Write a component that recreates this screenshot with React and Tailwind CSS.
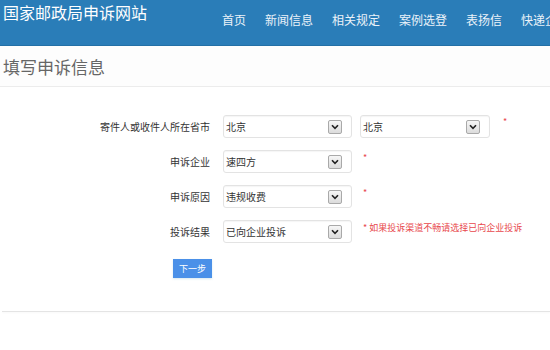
import React from "react";

const font = { fontFamily: '"Noto Sans CJK SC", "Noto Sans", sans-serif' };

function Arrow() {
  return (
    <span className="flex h-[14px] w-[14px] items-center justify-center rounded-[2px] border border-[#a9a9a9] bg-gradient-to-b from-[#f6f6f6] to-[#dcdcdc]">
      <svg width="8" height="6" viewBox="0 0 8 6">
        <path d="M1 1.2 L4 4.4 L7 1.2" fill="none" stroke="#222" strokeWidth="1.6" />
      </svg>
    </span>
  );
}

function Select({ value, w = "w-[129px]" }) {
  return (
    <div className={`flex h-[23px] ${w} items-center justify-between rounded-[3px] border border-[#e3e3e3] bg-white pl-[2px] pr-[9px] shadow-[inset_0_1px_1px_rgba(0,0,0,0.04)]`}>
      <span className="text-[10px] leading-none text-[#333]">{value}</span>
      <Arrow />
    </div>
  );
}

function Row({ label, children }) {
  return (
    <div className="flex h-[23px] items-center">
      <div className="w-[210px] pr-0 text-right text-[10px] leading-none text-[#333]">{label}</div>
      <div className="ml-[13px] flex h-full items-start">{children}</div>
    </div>
  );
}

const Star = ({ className = "" }) => (
  <span className={`text-[9px] leading-none text-[#e8474c] ${className}`}>*</span>
);

export default function App() {
  const nav = ["首页", "新闻信息", "相关规定", "案例选登", "表扬信", "快递企业"];
  return (
    <div style={font} className="h-[350px] w-[550px] overflow-hidden bg-white">
      <header className="flex h-[46px] border-b border-[#2370a6] bg-[#2a7db8]">
        <div className="ml-[3px] mt-[3px] whitespace-nowrap text-[16px] leading-[18px] text-white">国家邮政局申诉网站</div>
        <nav className="ml-[75px] mt-[13px] flex gap-[19px] whitespace-nowrap text-[12px] leading-[14px] text-[#eaf2f9]">
          {nav.map((n) => (
            <span key={n}>{n}</span>
          ))}
        </nav>
      </header>
      <div className="flex h-[41px] items-center border-b border-[#ececec] bg-[#fdfdfd] pl-[3px]">
        <h1 className="text-[17px] font-normal leading-none text-[#666]">填写申诉信息</h1>
      </div>
      <div className="mt-[28px] flex flex-col gap-[12px]">
        <Row label="寄件人或收件人所在省市">
          <Select value="北京" />
          <div className="ml-[8px]">
            <Select value="北京" w="w-[130px]" />
          </div>
          <Star className="ml-[13px] mt-[2px]" />
        </Row>
        <Row label="申诉企业">
          <Select value="速四方" />
          <Star className="ml-[11px] mt-[3px]" />
        </Row>
        <Row label="申诉原因">
          <Select value="违规收费" />
          <Star className="ml-[11px] mt-[3px]" />
        </Row>
        <Row label="投诉结果">
          <Select value="已向企业投诉" />
          <span className="ml-[11px] mt-[2px] whitespace-nowrap text-[9px] leading-[12px] text-[#e8474c]">* 如果投诉渠道不畅请选择已向企业投诉</span>
        </Row>
      </div>
      <button className="ml-[173px] mt-[16px] flex h-[19px] w-[39px] items-center justify-center bg-[#4a90e8] text-[9px] leading-none text-white shadow-[0_1px_2px_rgba(120,180,200,0.3)]">
        下一步
      </button>
      <div className="ml-[2px] mt-[33px] border-t border-[#e4e4e4] shadow-[0_1px_2px_rgba(0,0,0,0.04)]" />
    </div>
  );
}
